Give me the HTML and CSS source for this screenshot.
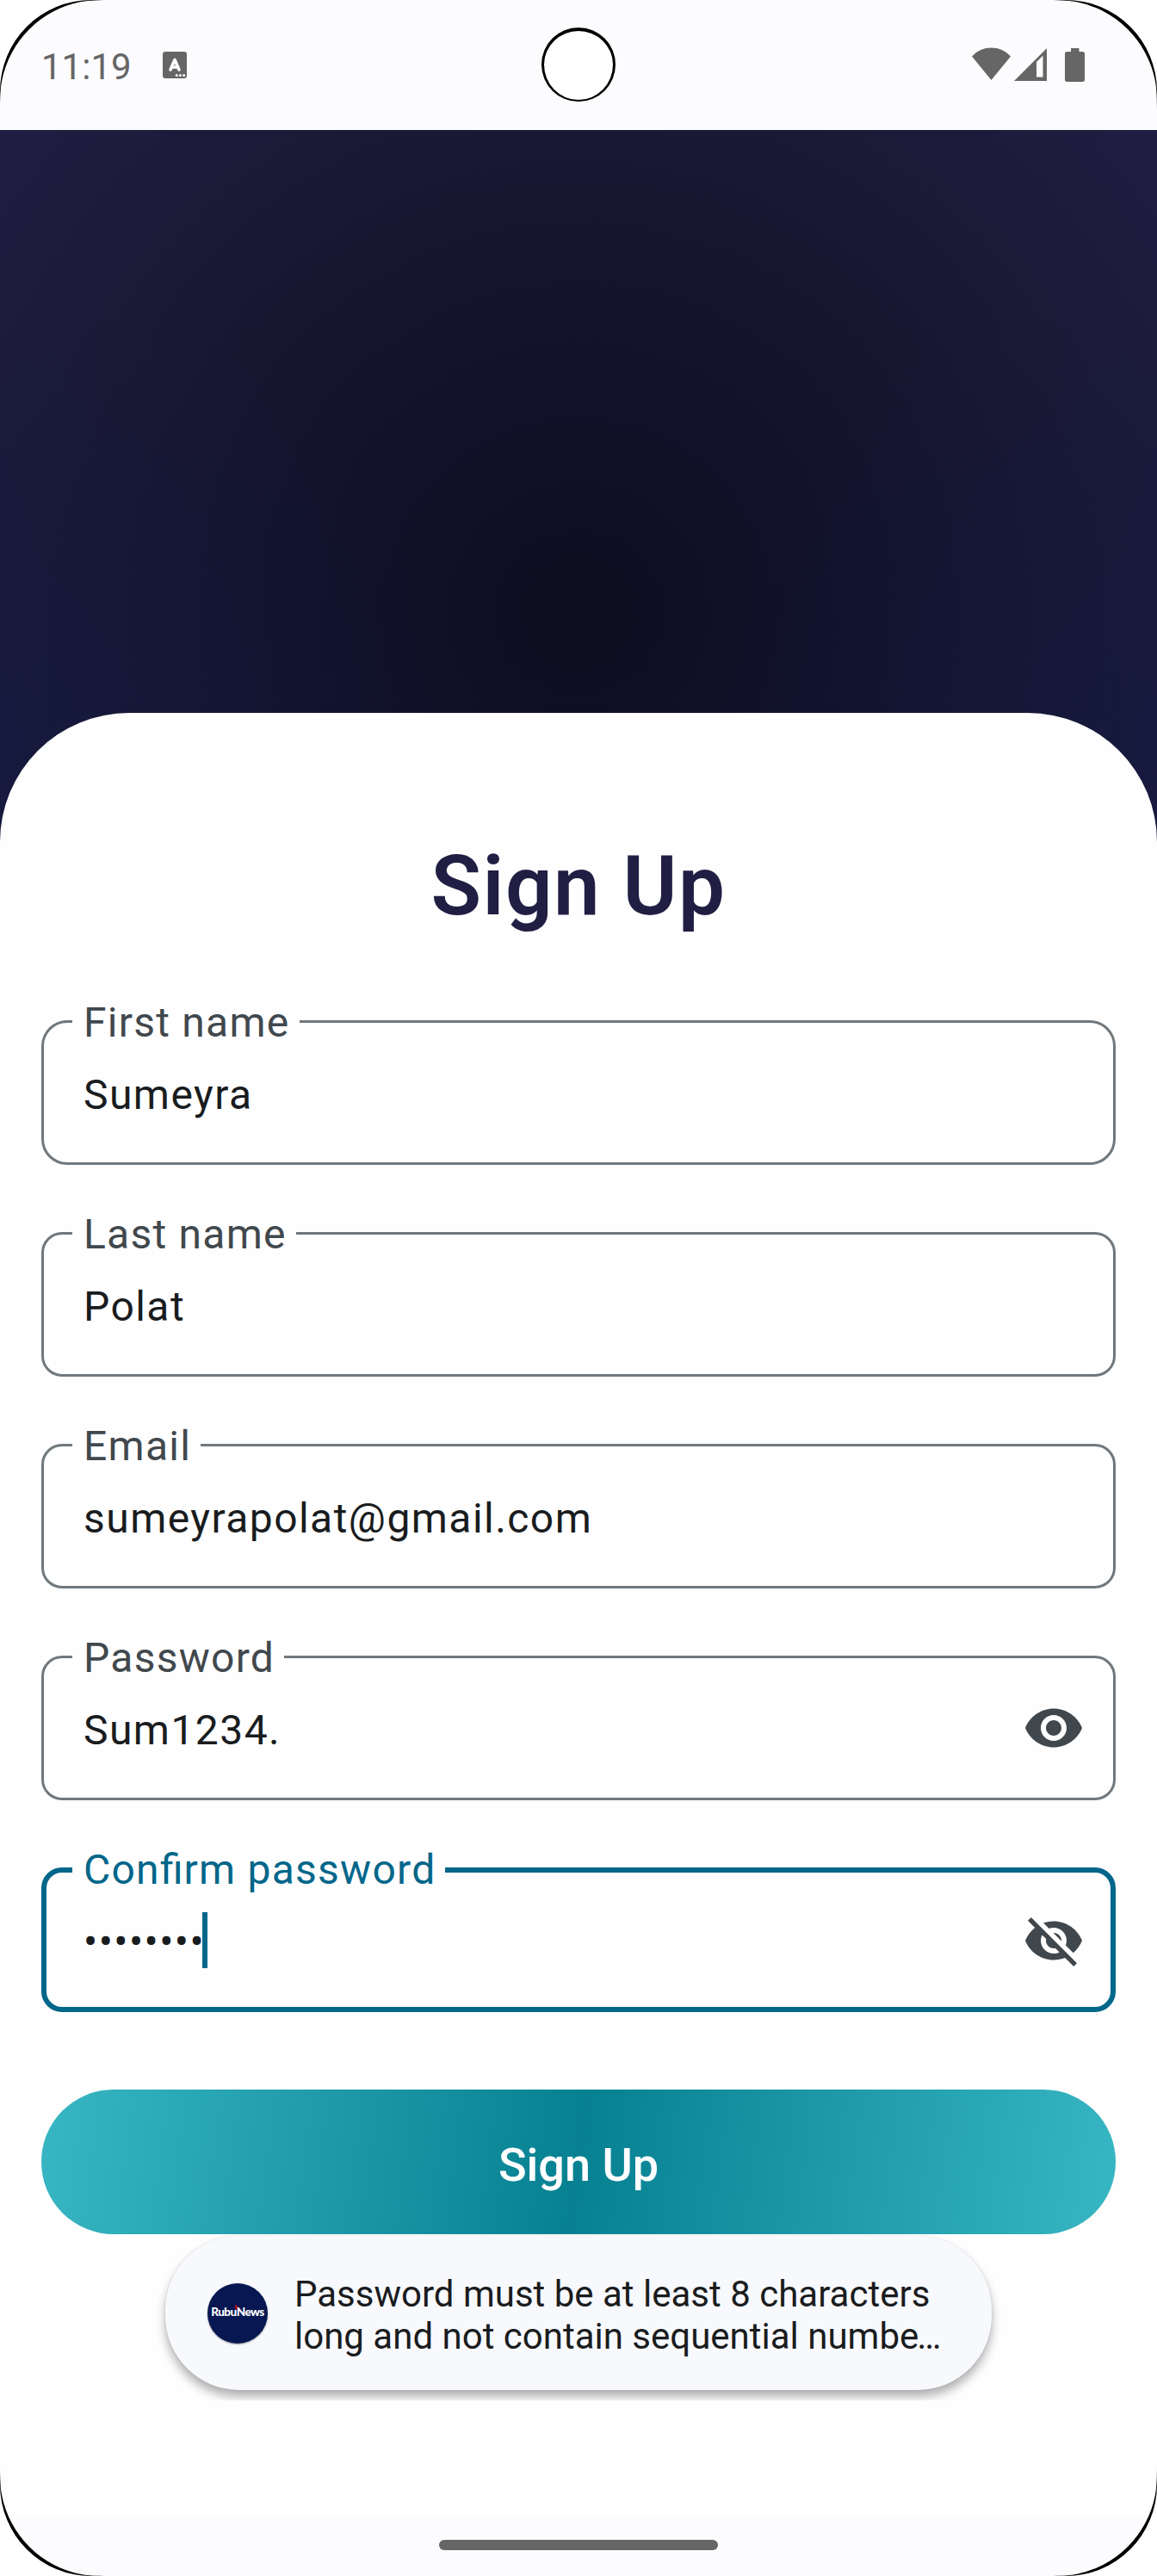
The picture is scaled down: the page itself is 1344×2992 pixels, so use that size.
FILE: index.html
```html
<!DOCTYPE html>
<html lang="en">
<head>
<meta charset="utf-8">
<title>Sign Up</title>
<link rel="stylesheet" href="styles.css">
</head>
<body>
<div class="screen">
  <header class="status-bar">
    <span class="clock">11:19</span>
    <svg class="ime-icon" width="28" height="31" viewBox="0 0 28 31">
      <rect width="28" height="31" rx="3" fill="#666"/>
      <path d="M9 21 14 9.500 19 21M10.500 18h7" fill="none" stroke="#fcfcff" stroke-width="3.600" stroke-linecap="round" stroke-linejoin="round"/>
      <circle cx="16.200" cy="27.500" r="1.500" fill="#fcfcff"/><circle cx="20.400" cy="27.500" r="1.500" fill="#fcfcff"/><circle cx="24.600" cy="27.500" r="1.500" fill="#fcfcff"/>
    </svg>
    <svg class="system-icons" width="132" height="40" viewBox="0 0 132 40" fill="#666">
      <path d="M1 10.500Q10 .600 23.500.600T46 10.500L23.500 38Z"/>
      <path fill-rule="evenodd" d="M50 39 88 1V39ZM76 17V34.500H83.500V9.500Z"/>
      <path d="M116 1h9.500v4h4q2.500 0 2.500 2.500v30q0 2.500-2.500 2.500h-18q-2.500 0-2.500-2.500v-30q0-2.500 2.500-2.500h4.500Z"/>
    </svg>
    <span class="camera"></span>
  </header>

  <main class="hero">
    <section class="sheet">
      <h1 class="title">Sign Up</h1>
      <form class="form">
        <div class="fields">
          <fieldset class="field field-first"><legend>First name</legend><span class="value">Sumeyra</span></fieldset>
          <fieldset class="field"><legend>Last name</legend><span class="value">Polat</span></fieldset>
          <fieldset class="field"><legend>Email</legend><span class="value">sumeyrapolat@gmail.com</span></fieldset>
          <fieldset class="field"><legend>Password</legend>
            <span class="value">Sum1234.</span>
            <svg class="eye" viewBox="0 0 24 24"><path d="M12 4.500C7 4.500 2.730 7.610 1 12c1.730 4.390 6 7.500 11 7.500s9.270-3.110 11-7.500c-1.730-4.390-6-7.500-11-7.500zM12 17c-2.760 0-5-2.240-5-5s2.240-5 5-5 5 2.240 5 5-2.240 5-5 5zm0-8c-1.660 0-3 1.340-3 3s1.340 3 3 3 3-1.340 3-3-1.340-3-3-3z"/></svg>
          </fieldset>
          <fieldset class="field field-focused"><legend>Con<span class="ligature">fi</span>rm password</legend>
            <span class="value">••••••••</span><span class="caret"></span>
            <svg class="eye" viewBox="0 0 24 24"><path d="M12 7c2.760 0 5 2.240 5 5 0 .650-.130 1.260-.360 1.830l2.920 2.920c1.510-1.260 2.700-2.890 3.430-4.750-1.730-4.390-6-7.500-11-7.500-1.400 0-2.740.250-3.980.700l2.160 2.160C10.740 7.130 11.350 7 12 7zM2 4.270l2.280 2.280.460.460C3.080 8.300 1.780 10.020 1 12c1.730 4.390 6 7.500 11 7.500 1.550 0 3.030-.300 4.380-.840l.420.420L19.730 22 21 20.730 3.270 3 2 4.270zM7.530 9.800l1.550 1.550c-.050.210-.080.430-.080.650 0 1.660 1.340 3 3 3 .220 0 .440-.030.650-.080l1.550 1.550c-.670.330-1.410.530-2.200.530-2.760 0-5-2.240-5-5 0-.790.200-1.530.530-2.200zm4.310-.780l3.150 3.150.020-.160c0-1.660-1.340-3-3-3l-.170.010z"/></svg>
          </fieldset>
        </div>
        <button class="submit" type="button">Sign Up</button>
      </form>
    </section>
  </main>

  <div class="toast-area">
    <div class="toast">
      <span class="app-icon"><span class="brand">Rubu<svg class="spark" width="5" height="6" viewBox="0 0 5 6"><path d="M2.500 0V6M.5 2.500h4" stroke="#c8101c" stroke-width="1.400"/></svg>News</span></span>
      <p class="message">Password must be at least 8 characters<br>long and not contain sequential numbe<span class="ellipsis">…</span></p>
    </div>
  </div>

  <footer class="nav-bar"><span class="handle"></span></footer>

  <svg class="bezel" viewBox="0 0 1344 2992">
    <defs>
      <g id="corner">
        <path d="M0 0H128C108 0 100 1 93 2.300A116 116 0 0 0 2.300 93C1 100 0 108 0 128Z" fill="#000"/>
        <path d="M0 0H106A106 106 0 0 0 0 106Z" fill="#fff"/>
      </g>
    </defs>
    <use href="#corner"/>
    <use href="#corner" transform="translate(1344 0) scale(-1 1)"/>
    <use href="#corner" transform="translate(0 2992) scale(1 -1)"/>
    <use href="#corner" transform="translate(1344 2992) scale(-1 -1)"/>
  </svg>
</div>
</body>
</html>
```
FILE: styles.css
```css
* { box-sizing: border-box; }
body { margin: 0; background: #fff; font-family: Roboto, sans-serif; }
.screen {
  position: relative;
  display: flex;
  flex-direction: column;
  width: 1344px;
  height: 2992px;
  overflow: hidden;
  background: #fefefe;
}

.status-bar {
  position: relative;
  display: flex;
  align-items: flex-start;
  height: 151px;
  padding: 0 84px 0 48px;
  background: #fcfcff;
}
.clock { margin-top: 53px; font-size: 42px; line-height: 50px; color: #666; width: 141px; }
.ime-icon { margin-top: 60px; }
.system-icons { margin: 55px 0 0 auto; }
.camera {
  position: absolute;
  left: 629px;
  top: 32px;
  width: 86px;
  height: 86px;
  border: solid #000;
  border-width: 4px 3px 2px;
  border-radius: 50%;
  background: #fff;
}

.hero {
  flex: 1;
  padding-top: 677px;
  background:
    radial-gradient(circle 520px at 0 700px, rgba(10, 24, 70, .35), rgba(10, 24, 70, 0)),
    radial-gradient(circle 520px at 100% 700px, rgba(10, 24, 70, .35), rgba(10, 24, 70, 0)),
    radial-gradient(circle 900px at 672px 560px, #0d0d1f 0, #12122b 32%, #1a1935 66%, #201e43 100%);
}
.sheet {
  height: 100%;
  padding: 141px 48px 0;
  border-radius: 150px 150px 0 0;
  background: #fefefe;
}
.title {
  margin: 0;
  height: 181px;
  text-align: center;
  font-size: 96px;
  line-height: 120px;
  font-weight: 600;
  letter-spacing: 1.500px;
  color: #201e43;
}
.fields { display: grid; grid-auto-rows: 203px; gap: 43px; align-items: end; }
.field {
  display: flex;
  align-items: flex-start;
  min-width: 0;
  height: 203px;
  margin: 0;
  padding: 0 33px 0 46px;
  border: 3px solid #70787d;
  border-radius: 24px;
  font-size: 48px;
  letter-spacing: 1.450px;
  color: #191c1e;
}
.field-first { border-radius: 30px; }
.field legend {
  margin-left: -13px;
  padding: 2px 11px 0 13px;
  line-height: 71px;
  letter-spacing: 1.250px;
  color: #41484d;
}
.value { line-height: 60px; margin-top: 19px; }
.eye { width: 72px; height: 72px; margin: 10px 0 0 auto; fill: #41484d; }
.field-focused { height: 201px; padding: 0 30px 0 43px; border: 6px solid #00668a; }
.field-focused legend { padding-top: 0; line-height: 72px; color: #00668a; }
.field-focused .value { margin-top: 18px; }
/* letter spacing switches the fi ligature off, so it is reset for this pair */
.ligature { letter-spacing: 0; margin-right: 1px; }
.caret { width: 6px; height: 65px; margin: 13px 0 0 -3px; background: #00668a; }

.submit {
  display: block;
  width: 100%;
  height: 168px;
  margin-top: 90px;
  padding: 6px 0 0;
  border: 0;
  border-radius: 84px;
  background: linear-gradient(97.670deg, #38b6c3, #078192 50%, #38b6c3);
  font: 500 54px Roboto, sans-serif;
  color: #fff;
}

.toast-area {
  position: absolute;
  left: 168px;
  top: 2596px;
  width: 1008px;
  height: 192px;
  padding: 1px 24px 0;
  overflow: hidden;
}
.toast {
  display: flex;
  align-items: center;
  height: 179px;
  padding: 0 49px;
  border-radius: 86px;
  background: #f8f9fd;
  box-shadow: 0 8px 12px rgba(0, 0, 0, .3), 0 0 3px rgba(0, 0, 0, .1);
}
.app-icon {
  display: flex;
  justify-content: center;
  width: 70px;
  height: 70px;
  margin-right: 31px;
  padding-top: 24px;
  border-radius: 50%;
  background: #061752;
  box-shadow: 0 1px 2px rgba(0, 0, 0, .4);
}
.brand { position: relative; font: 900 13.500px/18px Lato, sans-serif; letter-spacing: -.500px; color: #fff; }
.spark { position: absolute; left: 27px; top: 1px; }
.message { margin: 0; padding-top: 5px; font-size: 42px; line-height: 49px; white-space: nowrap; color: #1a1c1e; }
.ellipsis { margin-left: -2px; }

.nav-bar {
  display: flex;
  justify-content: center;
  height: 72px;
  padding-top: 30px;
  background: #fcfcff;
}
.handle { width: 324px; height: 12px; border-radius: 6px; background: #666; }
.bezel { position: absolute; left: 0; top: 0; width: 1344px; height: 2992px; }
```
